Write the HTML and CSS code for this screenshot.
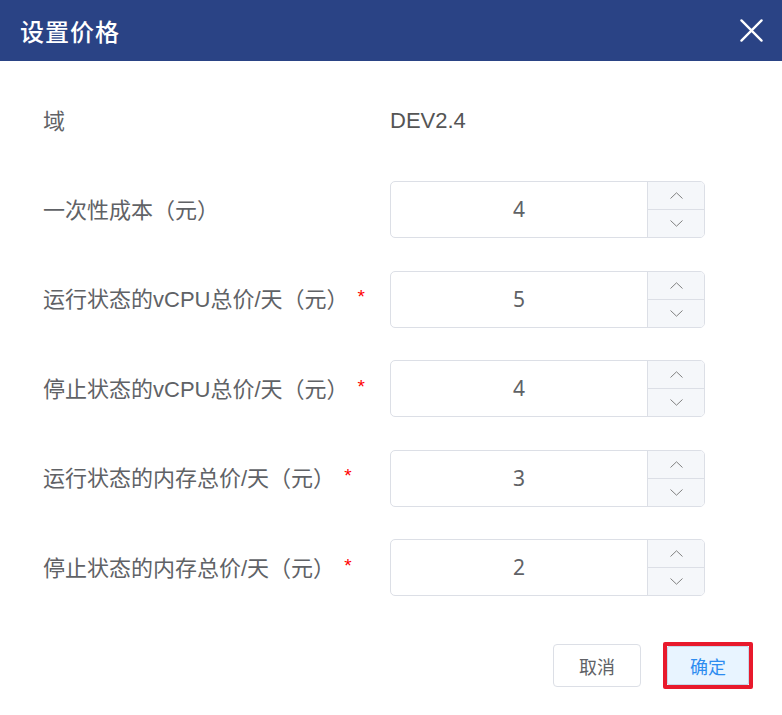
FILE: index.html
```html
<!DOCTYPE html>
<html lang="zh">
<head>
<meta charset="utf-8">
<link rel="stylesheet" href="styles.css">
</head>
<body>
<div class="dialog">
  <div class="header">
    <span class="title">设置价格</span>
    <svg class="close" width="24" height="24" viewBox="0 0 24 24"><path d="M1.5 1.5 L22.5 22.5 M22.5 1.5 L1.5 22.5" stroke="#fff" stroke-width="2.4" fill="none" stroke-linecap="round"/></svg>
  </div>
  <div class="body">
    <div class="row row-static">
      <div class="label">域</div>
      <div class="value">DEV2.4</div>
    </div>
    <div class="row">
      <div class="label">一次性成本（元）</div>
      <div class="num"><div class="num-val">4</div><div class="step"><div class="btn"><svg width="13" height="7" viewBox="0 0 13 7"><path d="M0.5 6.5 L6.5 0.8 L12.5 6.5" stroke="#808080" stroke-width="1" fill="none"/></svg></div><div class="btn"><svg width="13" height="7" viewBox="0 0 13 7"><path d="M0.5 0.5 L6.5 6.2 L12.5 0.5" stroke="#808080" stroke-width="1" fill="none"/></svg></div></div></div>
    </div>
    <div class="row">
      <div class="label">运行状态的vCPU总价/天（元）<span class="req">*</span></div>
      <div class="num"><div class="num-val">5</div><div class="step"><div class="btn"><svg width="13" height="7" viewBox="0 0 13 7"><path d="M0.5 6.5 L6.5 0.8 L12.5 6.5" stroke="#808080" stroke-width="1" fill="none"/></svg></div><div class="btn"><svg width="13" height="7" viewBox="0 0 13 7"><path d="M0.5 0.5 L6.5 6.2 L12.5 0.5" stroke="#808080" stroke-width="1" fill="none"/></svg></div></div></div>
    </div>
    <div class="row">
      <div class="label">停止状态的vCPU总价/天（元）<span class="req">*</span></div>
      <div class="num"><div class="num-val">4</div><div class="step"><div class="btn"><svg width="13" height="7" viewBox="0 0 13 7"><path d="M0.5 6.5 L6.5 0.8 L12.5 6.5" stroke="#808080" stroke-width="1" fill="none"/></svg></div><div class="btn"><svg width="13" height="7" viewBox="0 0 13 7"><path d="M0.5 0.5 L6.5 6.2 L12.5 0.5" stroke="#808080" stroke-width="1" fill="none"/></svg></div></div></div>
    </div>
    <div class="row">
      <div class="label">运行状态的内存总价/天（元）<span class="req">*</span></div>
      <div class="num"><div class="num-val">3</div><div class="step"><div class="btn"><svg width="13" height="7" viewBox="0 0 13 7"><path d="M0.5 6.5 L6.5 0.8 L12.5 6.5" stroke="#808080" stroke-width="1" fill="none"/></svg></div><div class="btn"><svg width="13" height="7" viewBox="0 0 13 7"><path d="M0.5 0.5 L6.5 6.2 L12.5 0.5" stroke="#808080" stroke-width="1" fill="none"/></svg></div></div></div>
    </div>
    <div class="row">
      <div class="label">停止状态的内存总价/天（元）<span class="req">*</span></div>
      <div class="num"><div class="num-val">2</div><div class="step"><div class="btn"><svg width="13" height="7" viewBox="0 0 13 7"><path d="M0.5 6.5 L6.5 0.8 L12.5 6.5" stroke="#808080" stroke-width="1" fill="none"/></svg></div><div class="btn"><svg width="13" height="7" viewBox="0 0 13 7"><path d="M0.5 0.5 L6.5 6.2 L12.5 0.5" stroke="#808080" stroke-width="1" fill="none"/></svg></div></div></div>
    </div>
  </div>
  <div class="footer">
    <button class="btn-cancel">取消</button>
    <span class="highlight"><button class="btn-ok">确定</button></span>
  </div>
</div>
</body>
</html>
```

FILE: styles.css
```css
* { box-sizing: border-box; }
html, body { margin: 0; padding: 0; background: #fff; }
body {
  font-family: "Liberation Sans", "Noto Sans CJK SC", sans-serif;
  width: 782px;
  height: 715px;
  overflow: hidden;
}
.dialog { width: 782px; }
.header {
  height: 61px;
  background: #2a4385;
  display: flex;
  align-items: center;
  justify-content: space-between;
  padding: 0 19px 0 20px;
}
.title {
  color: #fff;
  font-size: 24px;
  font-weight: 500;
  font-family: "Noto Sans CJK SC", sans-serif;
  letter-spacing: 1px;
}
.close { display: block; width: 23px; height: 23px; }
.body {
  padding: 41px 0 0 43px;
  display: flex;
  flex-direction: column;
}
.row {
  display: flex;
  align-items: center;
  height: 57px;
  margin-top: 32.5px;
}
.row-static { height: 40px; margin-top: 0; margin-bottom: 6.5px; }
.label {
  width: 347px;
  font-size: 22px;
  color: #606266;
  font-family: "Liberation Sans", "Noto Sans CJK SC", sans-serif;
  white-space: nowrap;
  padding-bottom: 4px;
}
.row-static .label { padding-bottom: 6px; }
.req {
  color: #f00;
  font-size: 19px;
  margin-left: 9px;
  vertical-align: 4px;
}
.value {
  font-size: 22px;
  color: #555;
  padding-bottom: 2px;
}
.num {
  width: 315px;
  height: 57px;
  border: 1px solid #dcdfe6;
  border-radius: 5px;
  display: flex;
  overflow: hidden;
}
.num-val {
  flex: 1;
  display: flex;
  align-items: center;
  justify-content: center;
  font-size: 21px;
  color: #606266;
  font-family: "Noto Sans", sans-serif;
  padding-bottom: 1px;
}
.step {
  width: 57px;
  border-left: 1px solid #dcdfe6;
  background: #f5f7fa;
  display: flex;
  flex-direction: column;
}
.step .btn {
  flex: 1;
  display: flex;
  align-items: center;
  justify-content: center;
}
.step .btn + .btn { border-top: 1px solid #dcdfe6; }
.footer {
  display: flex;
  justify-content: flex-end;
  align-items: center;
  padding: 46px 29px 0 0;
}
.btn-cancel {
  width: 88px;
  height: 43px;
  border: 1px solid #dcdfe6;
  border-radius: 4px;
  background: #fff;
  color: #606266;
  font-size: 18px;
  font-family: "Noto Sans CJK SC", sans-serif;
  padding: 0;
}
.highlight {
  margin-left: 22px;
  border: 4px solid #e8192c;
  border-radius: 2px;
  display: flex;
}
.btn-ok {
  width: 82px;
  height: 39px;
  border: 1px solid #c6d8ea;
  border-radius: 2px;
  background: #e8f4ff;
  color: #2d8cf0;
  font-size: 18px;
  font-family: "Noto Sans CJK SC", sans-serif;
  padding: 0;
}
```
